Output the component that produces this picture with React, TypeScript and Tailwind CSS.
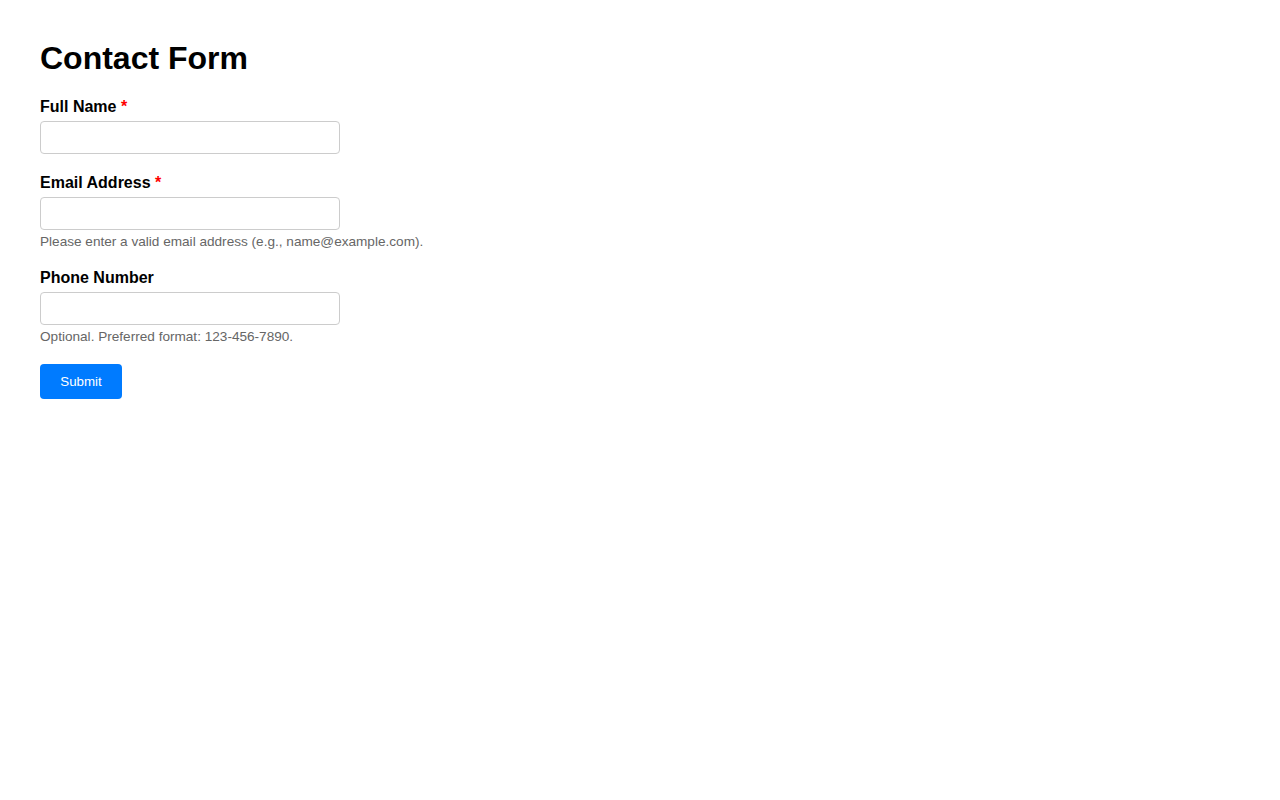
export default function App() {
  return (
    <div className="min-h-screen bg-white px-[40px] pt-[19px] text-black" style={{ fontFamily: '"Liberation Sans", Arial, Helvetica, sans-serif' }}>
      <h1 className="my-[21px] text-[32px] font-bold leading-[37px]">Contact Form</h1>
      <form onSubmit={(e) => e.preventDefault()}>
        <div className="mb-5">
          <label className="mb-[5px] block text-[16px] font-bold leading-[18px]">
            Full Name <span className="text-[#ff0000]">*</span>
          </label>
          <input type="text" className="block h-[33px] w-[300px] rounded-[4px] border border-[#ccc] px-2 text-[13px]" />
        </div>
        <div className="mb-5">
          <label className="mb-[5px] block text-[16px] font-bold leading-[18px]">
            Email Address <span className="text-[#ff0000]">*</span>
          </label>
          <input type="email" className="block h-[33px] w-[300px] rounded-[4px] border border-[#ccc] px-2 text-[13px]" />
          <small className="mt-[4px] block text-[13.6px] leading-[15px] text-[#666]">
            Please enter a valid email address (e.g., name@example.com).
          </small>
        </div>
        <div className="mb-5">
          <label className="mb-[5px] block text-[16px] font-bold leading-[18px]">Phone Number</label>
          <input type="tel" className="block h-[33px] w-[300px] rounded-[4px] border border-[#ccc] px-2 text-[13px]" />
          <small className="mt-[4px] block text-[13.6px] leading-[15px] text-[#666]">
            Optional. Preferred format: 123-456-7890.
          </small>
        </div>
        <button type="submit" className="h-[35px] w-[82px] rounded-[4px] bg-[#007bff] text-[13.33px] text-white">
          Submit
        </button>
      </form>
    </div>
  );
}
